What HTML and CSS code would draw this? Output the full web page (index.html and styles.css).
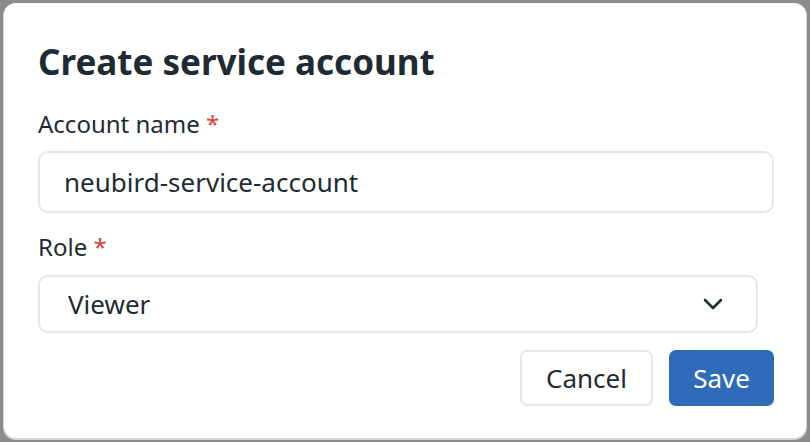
FILE: index.html
```html
<!DOCTYPE html>
<html lang="en">
<head>
<meta charset="utf-8">
<title>Create service account</title>
<link rel="stylesheet" href="styles.css">
</head>
<body>
<div class="dialog">
  <h1 class="title">Create service account</h1>
  <div class="field">
    <label class="label">Account name <span class="req">*</span></label>
    <div class="input">neubird-service-account</div>
  </div>
  <div class="field">
    <label class="label label-role">Role <span class="req">*</span></label>
    <div class="select">
      <span>Viewer</span>
      <svg class="chev" width="20" height="12" viewBox="0 0 20 12"><path d="M2 2 L10 10 L18 2" fill="none" stroke="#1f2b33" stroke-width="2.5" stroke-linecap="round" stroke-linejoin="round"/></svg>
    </div>
  </div>
  <div class="actions">
    <button class="btn btn-secondary">Cancel</button>
    <button class="btn btn-primary">Save</button>
  </div>
</div>
</body>
</html>
```
FILE: styles.css
```css
html, body {
  margin: 0;
  padding: 0;
}
body {
  background: #8c8c8c;
  width: 810px;
  height: 442px;
  overflow: hidden;
  font-family: "Noto Sans", "Open Sans", sans-serif;
  color: #1f2b33;
}
.dialog {
  box-sizing: border-box;
  margin: 3px 0 0 4px;
  width: 802px;
  height: 435px;
  background: #ffffff;
  border-radius: 12px;
  box-shadow: 0 1px 0 1px #d4d4d4;
  padding: 0 32px 0 34px;
  display: flex;
  flex-direction: column;
}
.title {
  margin: 37px 0 0 0;
  font-size: 35px;
  line-height: 44px;
  font-weight: 700;
  color: #1f2b33;
}
.field {
  display: flex;
  flex-direction: column;
}
.label {
  font-size: 24px;
  line-height: 30px;
  margin-top: 25px;
  color: #1f2b33;
}
.label-role {
  margin-top: 19px;
}
.req {
  color: #e0433b;
}
.input {
  box-sizing: border-box;
  margin-top: 12px;
  height: 62px;
  border: 2px solid #e4e8ec;
  border-radius: 10px;
  padding: 0 24px;
  display: flex;
  align-items: center;
  font-size: 26px;
}
.select {
  box-sizing: border-box;
  margin-top: 13px;
  width: 720px;
  height: 58px;
  border: 2px solid #e4e8ec;
  border-radius: 10px;
  padding: 0 33px 0 28px;
  display: flex;
  align-items: center;
  justify-content: space-between;
  font-size: 26px;
}
.chev {
  display: block;
}
.actions {
  margin-top: 17px;
  display: flex;
  justify-content: flex-end;
  gap: 16px;
}
.btn {
  box-sizing: border-box;
  height: 56px;
  border-radius: 7px;
  font-family: "Noto Sans", "Open Sans", sans-serif;
  font-size: 26px;
  padding: 0;
  cursor: pointer;
}
.btn-secondary {
  width: 133px;
  background: #ffffff;
  border: 2px solid #e4e8ec;
  color: #1f2b33;
}
.btn-primary {
  width: 105px;
  background: #2f6bb9;
  border: none;
  color: #ffffff;
}
```
